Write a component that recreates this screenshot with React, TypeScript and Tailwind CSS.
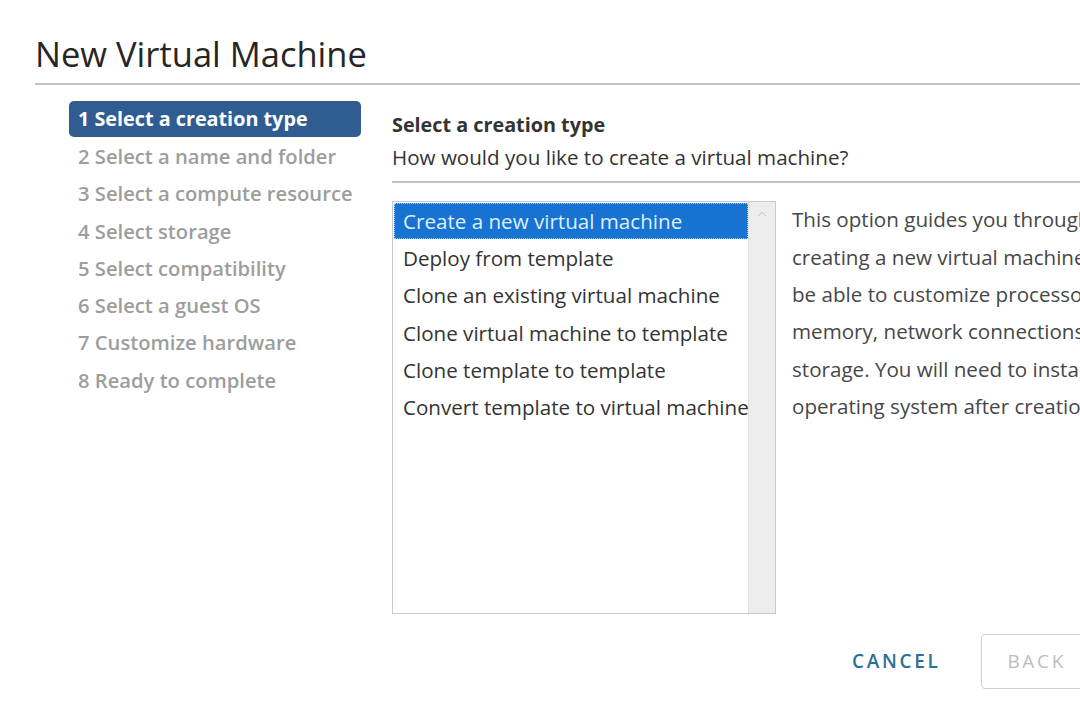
import { ChevronUp } from "lucide-react";

const steps = [
  "1 Select a creation type",
  "2 Select a name and folder",
  "3 Select a compute resource",
  "4 Select storage",
  "5 Select compatibility",
  "6 Select a guest OS",
  "7 Customize hardware",
  "8 Ready to complete",
];

const options = [
  "Create a new virtual machine",
  "Deploy from template",
  "Clone an existing virtual machine",
  "Clone virtual machine to template",
  "Clone template to template",
  "Convert template to virtual machine",
];

const description = [
  "This option guides you through",
  "creating a new virtual machine. You will",
  "be able to customize processors,",
  "memory, network connections, and",
  "storage. You will need to install a guest",
  "operating system after creation.",
];

export default function App() {
  return (
    <div
      className="w-[1080px] h-[720px] overflow-hidden bg-white text-[#333]"
      style={{ fontFamily: '"Open Sans", "Noto Sans", sans-serif' }}
    >
      <div className="w-[1400px] pl-[35px]">
        {/* Title */}
        <div className="pt-[34px] pb-[9px] border-b-[2px] border-[#c4c4c4]">
          <h1 className="text-[34.5px] leading-[40px] font-normal text-[#262626]">New Virtual Machine</h1>
        </div>

        <div className="flex pt-[16px]">
          {/* Steps */}
          <div className="ml-[34px] w-[292px] flex flex-col">
            {steps.map((s, i) =>
              i === 0 ? (
                <div
                  key={s}
                  className="h-[36px] mb-[0.5px] rounded-[5px] bg-[#2f5d92] text-white font-bold text-[19.8px] flex items-center px-[9px] whitespace-nowrap"
                >
                  {s}
                </div>
              ) : (
                <div
                  key={s}
                  className="h-[37.3px] text-[#9d9d9d] font-semibold text-[20.2px] flex items-center px-[9px] whitespace-nowrap"
                >
                  {s}
                </div>
              )
            )}
          </div>

          {/* Content */}
          <div className="ml-[31px] flex-1 pt-[7px]">
            <div className="pb-[7px] border-b-[2px] border-[#c4c4c4]">
              <div className="h-[33px] flex items-center font-bold text-[19.8px] text-[#333]">Select a creation type</div>
              <div className="h-[33px] flex items-center text-[20.6px] text-[#333]">
                How would you like to create a virtual machine?
              </div>
            </div>

            <div className="flex mt-[18px]">
              {/* Listbox */}
              <div className="w-[384px] h-[413px] border border-[#c9c9c9] flex">
                <div className="flex-1 pt-[1px] pl-[1px] overflow-hidden">
                  {options.map((o, i) => (
                    <div
                      key={o}
                      className={
                        i === 0
                          ? "h-[36px] mb-[1px] flex items-center px-[8px] text-[20.6px] whitespace-nowrap bg-[#1872d2] text-[#dcefff] border border-dotted border-[#9fcff5]"
                          : "h-[37.2px] flex items-center px-[9px] text-[20.6px] whitespace-nowrap text-[#333]"
                      }
                    >
                      {o}
                    </div>
                  ))}
                </div>
                <div className="w-[27px] bg-[#ededed] border-l border-[#dedede] flex justify-center pt-[5px]">
                  <ChevronUp size={14} strokeWidth={1.5} className="text-[#b5b5b5]" />
                </div>
              </div>

              {/* Description */}
              <div className="ml-[16px] text-[20.6px] text-[#474747] whitespace-nowrap">
                {description.map((l) => (
                  <div key={l} className="h-[37.4px] flex items-center">
                    {l}
                  </div>
                ))}
              </div>
            </div>
          </div>
        </div>

        {/* Footer */}
        <div className="flex items-center pl-[817px] mt-[20px] gap-[41px]">
          <button className="text-[19px] font-semibold tracking-[0.14em] text-[#2b6f9b]">CANCEL</button>
          <button className="h-[55px] w-[140px] border border-[#cfcfcf] rounded-[4px] text-[19px] tracking-[0.14em] text-[#bdbdbd] text-left pl-[25px]">
            BACK
          </button>
        </div>
      </div>
    </div>
  );
}
